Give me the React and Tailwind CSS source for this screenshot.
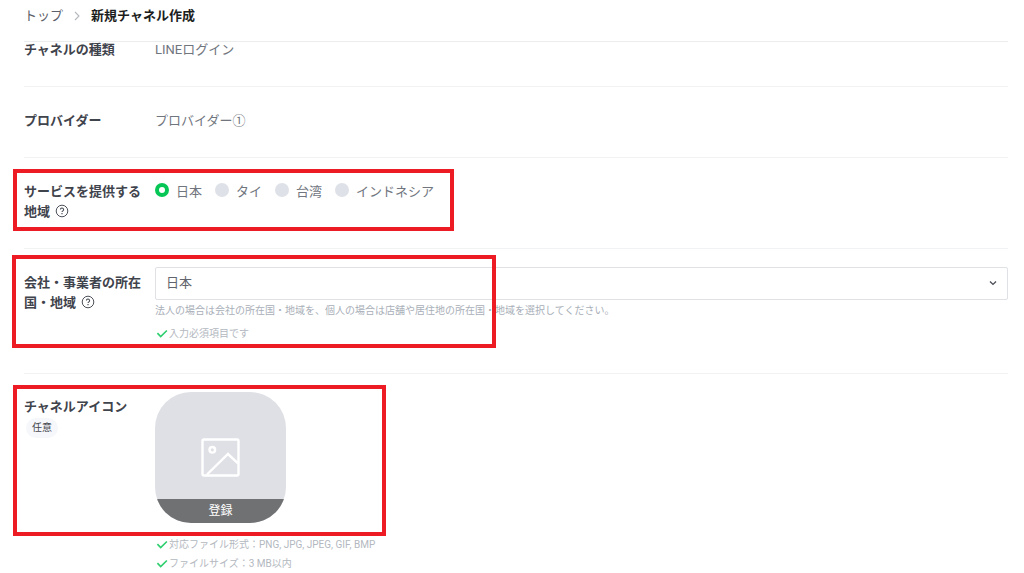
import React, { useState } from 'react';

const regions = ['日本', 'タイ', '台湾', 'インドネシア'];

const HelpIcon = () => (
  <svg viewBox="0 0 14 14" className="ml-0.5 inline size-3.5 align-[-2px]" fill="none" stroke="#4b505a" aria-hidden="true">
    <circle cx="7" cy="7" r="5.8" strokeWidth="1" />
    <path d="M5.4 5.6a1.6 1.6 0 1 1 2.5 1.3c-.6.4-.9.6-.9 1.2" strokeWidth="1.1" />
    <path d="M7 9.1v1.1" strokeWidth="1.2" />
  </svg>
);

const CheckIcon = () => (
  <svg viewBox="0 0 14 12" className="h-3 w-3.5 shrink-0" fill="none" stroke="#2fcf6f" strokeWidth="1.7" aria-hidden="true">
    <path d="M2.4 5.2l3.3 3.3 6.2-6" />
  </svg>
);

const ImageIcon = () => (
  <svg viewBox="0 0 39 39" className="size-[39px]" fill="none" stroke="#fff" strokeWidth="2.4" aria-hidden="true">
    <rect x="1.5" y="1.5" width="36" height="36" rx="1.5" />
    <circle cx="11.3" cy="11.8" r="2.8" strokeWidth="2.4" />
    <path d="M6 36.5L27 16l10 9.3" />
  </svg>
);

const Check = ({ children }) => (
  <li className="flex items-center text-[10px] leading-4 text-[#b3b8c0]">
    <CheckIcon />
    {children}
  </li>
);

const Row = ({ className = '', children }) => (
  <div className={`relative grid grid-cols-[119px_1fr] gap-x-3 border-b border-[#f1f2f4] last:border-b-0 ${className}`}>
    {children}
  </div>
);

const labelClass = 'block font-bold text-[#3f434c]';

const Highlight = ({ className }) => (
  <div className={`pointer-events-none absolute border-4 border-[#ed1c24] ${className}`} />
);

const App = () => {
  const [region, setRegion] = useState('日本');
  const [country, setCountry] = useState('日本');

  return (
    <div className="bg-white pr-4 pl-6 font-['Roboto','Noto_Sans_CJK_JP',sans-serif] text-[13px] leading-5 text-[#70757e]">
      <header className="border-b border-[#ebecee] pt-1.5 pb-[15px]">
        <nav className="flex items-center">
          <a href="#top" className="text-[#5c6068]">トップ</a>
          <svg viewBox="0 0 8 12" className="mr-2.5 ml-2.5 h-3 w-2" fill="none" stroke="#b5b8bd" strokeWidth="1.1" aria-hidden="true">
            <path d="M2 2l4 4-4 4" />
          </svg>
          <span className="font-bold text-[#1c1d20]">新規チャネル作成</span>
        </nav>
      </header>

      <main className="-mt-0.5">
        <Row className="pb-[26px]">
          <div className={labelClass}>チャネルの種類</div>
          <div>LINEログイン</div>
        </Row>

        <Row className="pt-6 pb-[26px]">
          <div className={labelClass}>プロバイダー</div>
          <div>プロバイダー①</div>
        </Row>

        <Row className="pt-6 pb-[26px]">
          <div id="region-label" className={labelClass}>
            サービスを提供する地域 <HelpIcon />
          </div>
          <div role="radiogroup" aria-labelledby="region-label" className="flex flex-wrap items-start gap-[13px]">
            {regions.map((name) => (
              <label key={name} className="flex items-start gap-[7px]">
                <input
                  type="radio"
                  name="region"
                  value={name}
                  checked={region === name}
                  onChange={() => setRegion(name)}
                  className="mt-px size-3.5 appearance-none rounded-full bg-[#dee1e7] checked:border-4 checked:border-[#06c755] checked:bg-white"
                />
                {name}
              </label>
            ))}
          </div>
          <Highlight className="top-[11px] -left-[11px] h-[62px] w-[441px]" />
        </Row>

        <Row className="pb-[31px]">
          <label htmlFor="country" className={`${labelClass} pt-6`}>
            会社・事業者の所在国・地域 <HelpIcon />
          </label>
          <div className="pt-[18px]">
            <div className="relative">
              <select
                id="country"
                value={country}
                onChange={(e) => setCountry(e.target.value)}
                className="h-[33px] w-full appearance-none rounded-xs border border-[#dfe1e5] bg-white px-2.5 pb-0.5 text-[#5f646d]"
              >
                {regions.map((name) => (
                  <option key={name}>{name}</option>
                ))}
              </select>
              <svg viewBox="0 0 8 8" className="pointer-events-none absolute top-3 right-[11px] size-2" fill="none" stroke="#4a4e57" strokeWidth="1.4" aria-hidden="true">
                <path d="M1 2.6l3 2.8 3-2.8" />
              </svg>
            </div>
            <p className="mt-[3px] text-[10px] leading-4 text-[#a9afb8]">
              法人の場合は会社の所在国・地域を、個人の場合は店舗や居住地の所在国・地域を選択してください。
            </p>
            <ul className="mt-[7px]">
              <Check>入力必須項目です</Check>
            </ul>
          </div>
          <Highlight className="top-1.5 -left-3 h-[93px] w-[484px]" />
        </Row>

        <Row>
          <div className="pt-[23px]">
            <div className={labelClass}>チャネルアイコン</div>
            <span className="ml-0.5 inline-block rounded-full bg-[#f6f7fa] px-1.5 text-[10px] leading-5 text-[#45484e]">任意</span>
          </div>
          <div className="pt-[18px]">
            <button
              type="button"
              className="relative flex size-[131px] items-center justify-center overflow-hidden rounded-[36px] bg-[#dfe0e5]"
            >
              <ImageIcon />
              <span className="absolute inset-x-0 bottom-0 h-6 bg-[#707173] text-xs leading-6 text-white">登録</span>
            </button>
            <ul className="mt-3.5 space-y-[3px]">
              <Check>対応ファイル形式：PNG, JPG, JPEG, GIF, BMP</Check>
              <Check>ファイルサイズ：3 MB以内</Check>
            </ul>
          </div>
          <Highlight className="top-[11px] -left-[11px] h-[151px] w-[373px]" />
        </Row>
      </main>
    </div>
  );
};

export default App;
